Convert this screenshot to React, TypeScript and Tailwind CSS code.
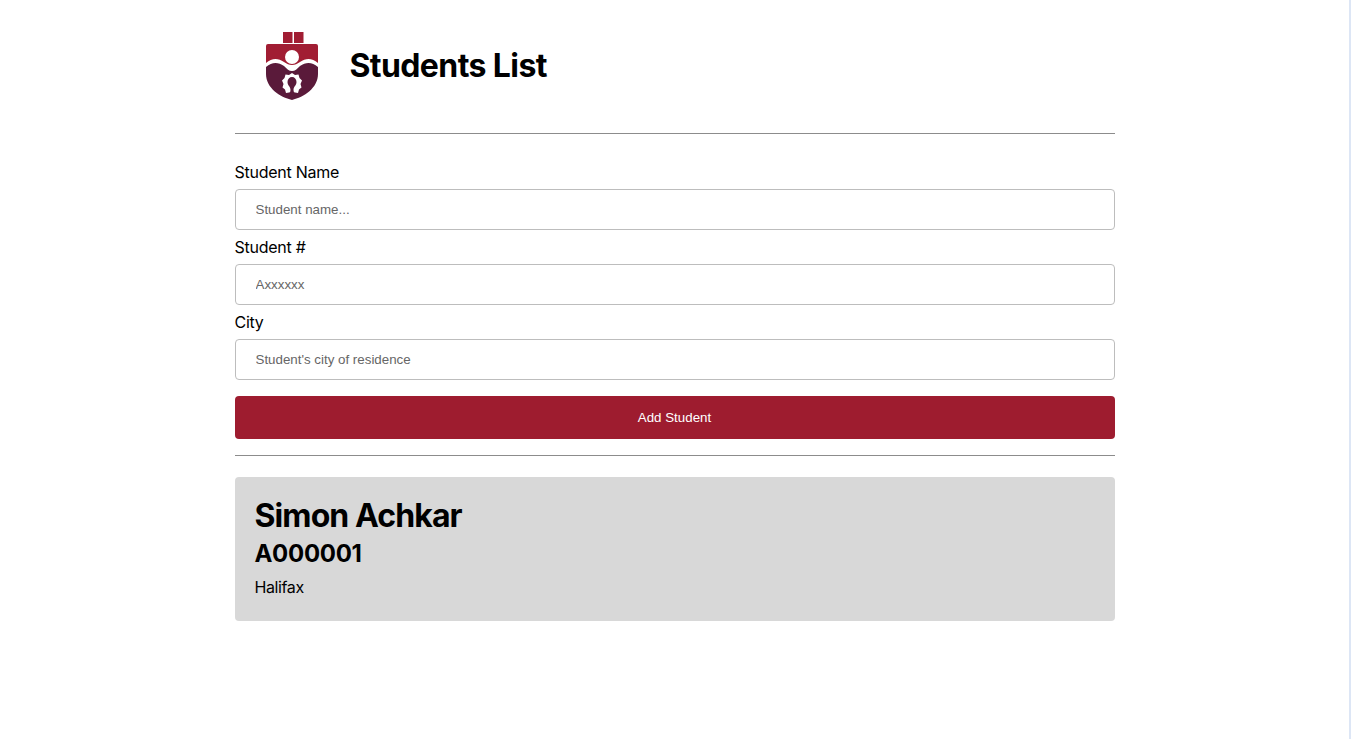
import React from 'react'

const Logo = () => (
  <svg width="56" height="72" viewBox="0 0 56 72">
    <path d="M19 2h9.500v11H19zM30 2h9.500v11H30z" fill="#a11d33" />
    <path d="M2 16q0-2 2-2h48q2 0 2 2v17c-6-5-12-5-18-1-3 2-5 3-8 3s-5-1-8-3c-6-4-12-4-18 1z" fill="#a11d33" />
    <circle cx="28" cy="27" r="7" fill="#fff" />
    <path d="M2 37c6-5 12-5 18-1 3 3 5 5 8 5s5-2 8-5c6-4 12-4 18 1v7c0 14-14 23-26 26C16 67 2 58 2 44z" fill="#5a1a3a" />
    <path d="M28 43l3 2 3.500-.5 1 3.500 2.500 2.500-1.500 3.500 1 3.500-2.500 2-1 3.500-3-.5-3-1-3 1-3 .5-1-3.500-2.500-2 1-3.500-1.500-3.500 2.500-2.500 1-3.500 3.500.5z" fill="#fff" />
    <path d="M28 47c2.500 0 4.500 2 4.500 5 0 3.500-3 4.500-3 8l1 6h-5l1-6c0-3.500-3-4.500-3-8 0-3 2-5 4.500-5z" fill="#5a1a3a" />
  </svg>
)

const inputClass =
  "h-[41px] w-full rounded border border-[#bdbdbd] bg-white px-5 font-['Liberation_Sans',sans-serif] text-[13.33px] text-black outline-none placeholder:text-[#666666]"

const Field = ({ label, placeholder }: { label: string; placeholder: string }) => (
  <div className="flex flex-col">
    <label className="mb-[6px] block h-[22px] leading-[22px] tracking-[-0.25px]">{label}</label>
    <input type="text" className={inputClass} placeholder={placeholder} />
  </div>
)

export default function App() {
  return (
    <div className="flex min-h-[739px] bg-white font-['Inter',sans-serif] text-base text-black">
      <div className="flex-1">
        <div className="mx-auto w-[880px]">
          <header className="flex h-[133px] items-center pb-[1px] pl-[29px]">
            <Logo />
            <h1 className="ml-[30px] pb-[1px] text-[32px] font-bold tracking-[-0.6px]">Students List</h1>
          </header>
          <hr className="border-t border-[#8c8c8c]" />
          <div className="mt-[27px] flex flex-col gap-[6px]">
            <Field label="Student Name" placeholder="Student name..." />
            <Field label="Student #" placeholder="Axxxxxx" />
            <Field label="City" placeholder="Student's city of residence" />
          </div>
          <button className="mt-4 h-[43px] w-full rounded bg-[#9e1c2f] font-['Liberation_Sans',sans-serif] text-[13.33px] text-white">
            Add Student
          </button>
          <hr className="mt-4 border-t border-[#8c8c8c]" />
          <div className="mt-[21px] h-[144px] rounded bg-[#d8d8d8] px-5 pt-5">
            <h2 className="text-[32px] leading-[38px] font-bold tracking-[-0.9px]">Simon Achkar</h2>
            <h3 className="text-2xl leading-[38px] font-bold tracking-[-0.3px]">A000001</h3>
            <p className="mt-1 leading-5 tracking-[-0.4px]">Halifax</p>
          </div>
        </div>
      </div>
      <div className="w-[2px] bg-[#dde6f5]" />
    </div>
  )
}
